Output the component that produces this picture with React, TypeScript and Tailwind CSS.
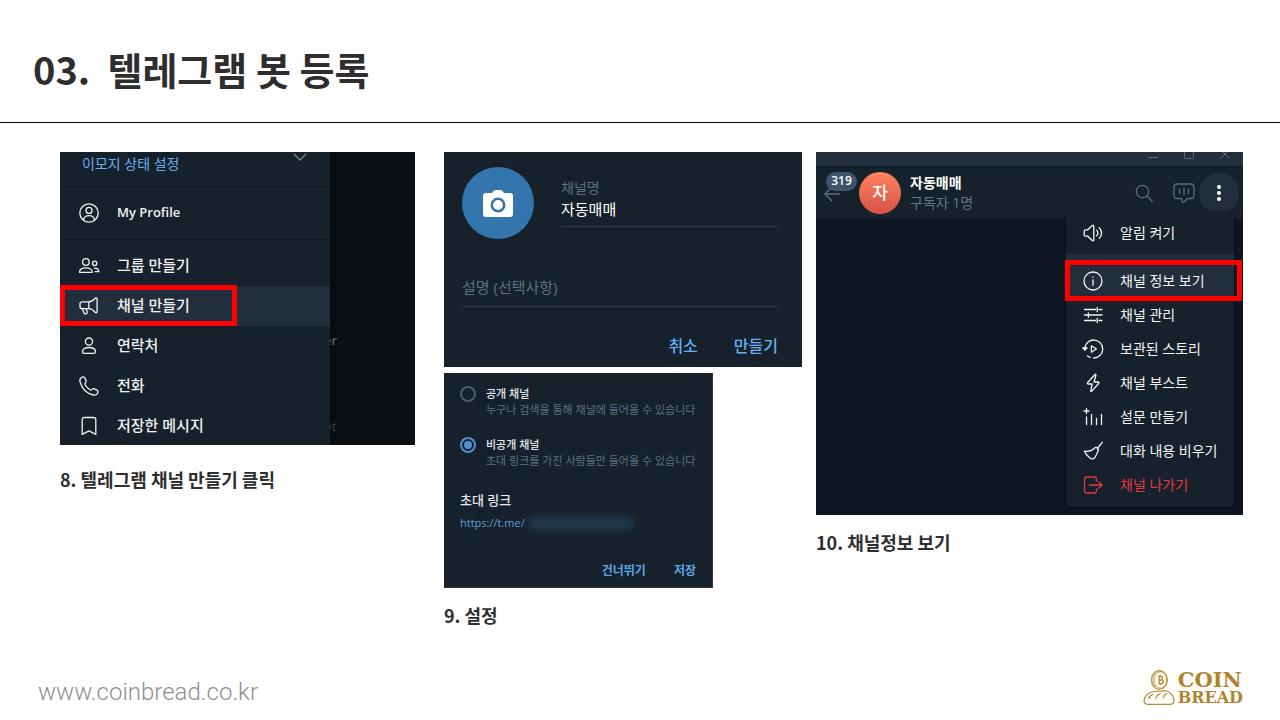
import type { ReactNode } from "react";

function Icon({ children, className = "size-6" }: { children: ReactNode; className?: string }) {
  return (
    <svg
      viewBox="0 0 24 24"
      fill="none"
      stroke="currentColor"
      strokeWidth="1.3"
      strokeLinecap="round"
      strokeLinejoin="round"
      className={`shrink-0 ${className}`}
      aria-hidden="true"
    >
      {children}
    </svg>
  );
}

const icons = {
  profile: (
    <>
      <circle cx="12" cy="12" r="9.2" />
      <circle cx="12" cy="9.4" r="3" />
      <path d="M6.600 18.600c.4-2.600 2.600-4 5.400-4s5 1.400 5.400 4" />
    </>
  ),
  group: (
    <>
      <circle cx="8.900" cy="8" r="3.300" />
      <path d="M2.500 18.300c0-2.900 2.600-4.400 6.400-4.400s6.400 1.500 6.400 4.400z" />
      <circle cx="17.700" cy="9.300" r="2.200" />
      <path d="M17.300 14.100c2.800 0 4.500 1.300 4.500 3.600h-3.600" />
    </>
  ),
  megaphone: (
    <>
      <path d="M11.800 7.800H5.200c-1.300 0-2.200.9-2.200 2.100v2.600c0 1.300.9 2.200 2.200 2.200h6.600zM11.800 7.800c2.500 0 4.700-1.600 6.300-3.500.7-.8 2-.4 2 .7v12.600c0 1.100-1.300 1.500-2 .7-1.600-1.900-3.800-3.600-6.300-3.600" />
      <path d="M5.300 14.800l1.600 4c.4 1 1.300 1.300 2.300.9 1-.4 1.300-1.300.9-2.200l-1-2.700" />
    </>
  ),
  contact: (
    <>
      <circle cx="12" cy="7.600" r="3.600" />
      <path d="M5.500 17.800c0-3 2.700-4.300 6.500-4.300s6.500 1.300 6.500 4.300c0 .9-.6 1.500-1.500 1.500H7c-.9 0-1.500-.6-1.500-1.500z" />
    </>
  ),
  phone: (
    <path d="M4.400 3.500c1.500-1 2.800-.7 3.500.6l1.200 2.500c.4.900.1 1.600-.5 2.200-.8.700-.9 1.300-.4 2.200 1.200 2 2.700 3.500 4.800 4.800.9.500 1.500.4 2.200-.4.600-.7 1.300-.9 2.200-.5l2.500 1.300c1.300.7 1.500 2 .5 3.400-.9 1.300-2.400 1.800-4.100 1.400C9.600 19.400 4.800 14.600 3 7.600c-.4-1.700.100-3.200 1.400-4.100z" />
  ),
  bookmark: (
    <path d="M5.200 5.600c0-1.300.8-2.100 2.100-2.100h9.400c1.300 0 2.100.8 2.100 2.100v14.800L12 16.900l-6.800 3.500z" />
  ),
  speaker: (
    <>
      <path d="M4.600 8.800h2.200l4.500-4.300c.6-.6 1.500-.2 1.500.6v13.800c0 .8-.9 1.200-1.500.6l-4.500-4.300H4.600c-.9 0-1.400-.5-1.400-1.400v-3.600c0-.9.5-1.400 1.400-1.400z" />
      <path d="M15.700 9.200c1.600 1.500 1.600 4.100 0 5.600M18.300 6.800c3 2.900 3 7.500 0 10.400" />
    </>
  ),
  info: (
    <>
      <circle cx="12" cy="12" r="9" />
      <path d="M12 11v5.200M12 8v.2" />
    </>
  ),
  sliders: (
    <path d="M3.500 6.500h11M18 6.500h3M16.200 4.500v4M8.500 12H21M3.500 12H7M7.400 9.800v4.400M3.500 17.500h11M18 17.500h3M16.200 15.500v4" />
  ),
  story: (
    <>
      <path d="M3.800 10.800A9 9 0 1 1 12.600 21M9.400 20.500a9 9 0 0 1-3-1.700" />
      <path d="M1.800 10.800l2 2.400 2.300-2.400z" fill="currentColor" />
      <path d="M10.400 8.800l5 3.200-5 3.200z" />
    </>
  ),
  bolt: (
    <path d="M14 3.500l-7.500 8.300c-.5.600-.3 1.200.5 1.200h4.200l-1.500 6.800c-.1.700.400 1.100.9.600l7.200-8.200c.5-.6.300-1.200-.5-1.200h-4.200l1.800-6.800c.2-.7-.4-1.200-.9-.7z" />
  ),
  poll: <path d="M5.500 3.500v5M3 6h5M5.500 12v7.500M10.500 9.500v10M15.500 13.500v6M20.500 9.500v10" />,
  broom: (
    <>
      <path d="M21.300 3.300l-5 6.200" />
      <path d="M3.500 12.200c4.300.6 7.300-.2 9.600-2.800.9-1 2.300-1.200 3.300-.4s1.200 2.200.5 3.300c-1.400 2.200-1.300 4.600-3.700 6.900-1.300 1.100-2.900.8-4.500-.4-2.300-1.600-4.200-3.800-5.200-6.600z" />
    </>
  ),
  leave: (
    <path d="M15.500 8.200V6.500c0-1.500-1-2.500-2.500-2.500H6C4.500 4 3.500 5 3.500 6.500v11C3.500 19 4.500 20 6 20h7c1.500 0 2.500-1 2.500-2.500v-1.700M8.500 12h12.300M17.600 8.600L21 12l-3.400 3.400" />
  ),
};

type IconName = keyof typeof icons;

function SideRow({ icon, label, active }: { icon: IconName; label: string; active?: boolean }) {
  return (
    <button
      type="button"
      className={`relative flex h-10 w-full shrink-0 items-center gap-[16px] pl-[17px] text-left text-[#f0f2f4] ${active ? "bg-[#232e3c]" : ""}`}
    >
      <Icon>{icons[icon]}</Icon>
      {icon === "profile" ? (
        <span className="text-[13px] font-semibold">{label}</span>
      ) : (
        <span className="pb-[2px] text-[15px] font-medium">{label}</span>
      )}
      {active && <span className="absolute -top-px left-0 h-[41px] w-[177px] border-5 border-[#ff0000]" />}
    </button>
  );
}

function SideMenuPanel() {
  return (
    <div className="flex h-[293px] overflow-hidden bg-[#0b1014]">
      <nav className="z-10 flex w-[270px] shrink-0 flex-col bg-[#17212b]">
        <div className="flex h-[35px] shrink-0 justify-between border-b border-[#101921] pr-[22px] pl-[22px] text-[#64b0f2]">
          <a href="#status" className="mt-[2px] text-[14px] leading-5">이모지 상태 설정</a>
          <svg viewBox="0 0 16 16" className="size-4 text-[#6d7f8f]" fill="none" stroke="currentColor" strokeWidth="1.5" aria-hidden="true">
            <path d="M2 2l6 6 6-6" />
          </svg>
        </div>
        <div className="shrink-0 border-b border-[#101921] py-[6px]">
          <SideRow icon="profile" label="My Profile" />
        </div>
        <div className="pt-[6px]">
          <SideRow icon="group" label="그룹 만들기" />
          <SideRow icon="megaphone" label="채널 만들기" active />
          <SideRow icon="contact" label="연락처" />
          <SideRow icon="phone" label="전화" />
          <SideRow icon="bookmark" label="저장한 메시지" />
        </div>
      </nav>
      <div className="w-[7px] shrink-0 bg-[#080c10]" />
      <div className="-ml-[7px] flex flex-col pt-[178px] text-[13px] leading-5">
        <span className="-ml-[6px] font-semibold text-[#5c6063]">er</span>
        <span className="mt-[66px] -ml-[6px] text-[#3a3f43]">ot</span>
      </div>
    </div>
  );
}

function NewChannelPanel() {
  return (
    <form className="flex h-[215px] flex-col bg-[#17212b] pt-[15px] pr-[24px] pl-[18px]">
      <div className="flex gap-[27px]">
        <button type="button" aria-label="사진" className="flex size-[72px] shrink-0 items-center justify-center rounded-full bg-[#3375ad]">
          <svg viewBox="0 0 30 27" className="h-[27px] w-[30px]" aria-hidden="true">
            <path fill="#fff" d="M3 3h6l1.500-2Q11.300 0 12.500 0h5q1.200 0 2 1L21 3h6q3 0 3 3v18q0 3-3 3H3q-3 0-3-3V6q0-3 3-3z" />
            <circle cx="15" cy="15" r="6.200" fill="none" stroke="#3375ad" strokeWidth="2.600" />
          </svg>
        </button>
        <div className="flex grow flex-col pt-[11px]">
          <label htmlFor="name" className="text-[14px] leading-5 text-[#5f7082]">채널명</label>
          <input
            id="name"
            defaultValue="자동매매"
            className="h-[29px] w-full border-b border-[#323d48] pb-[8px] text-[15px] text-white outline-none"
          />
        </div>
      </div>
      <input
        aria-label="설명 (선택사항)"
        placeholder="설명 (선택사항)"
        className="mt-[35px] h-[33px] w-full shrink-0 border-b border-[#323d48] pb-[6px] text-[15px] text-white outline-none placeholder:text-[#5f7082]"
      />
      <div className="mt-[29px] flex justify-end gap-[36px] text-[16px] leading-5 font-medium text-[#64b0f2]">
        <button type="button">취소</button>
        <button type="button">만들기</button>
      </div>
    </form>
  );
}

function ChannelType({ id, title, note, checked }: { id: string; title: string; note: string; checked?: boolean }) {
  return (
    <div className="flex h-[51px] gap-[10px]">
      <input
        id={id}
        type="radio"
        name="type"
        defaultChecked={checked}
        className="mt-px size-4 shrink-0 appearance-none rounded-full border-2 border-[#4d5d6d] p-[2px] checked:border-[#5290cf] checked:bg-[#5290cf] checked:bg-clip-content"
      />
      <label htmlFor={id} className="mt-px flex flex-col text-[11px] leading-4">
        <span className="font-medium text-[#e6eaee]">{title}</span>
        <span className="text-[#5f7082]">{note}</span>
      </label>
    </div>
  );
}

function ChannelTypePanel() {
  return (
    <form className="mt-[6px] flex h-[215px] w-[269px] flex-col border-r border-b border-[#2a3541] bg-[#17212b] pt-[12px] pr-[16px] pl-[16px]">
      <ChannelType id="public" title="공개 채널" note="누구나 검색을 통해 채널에 들어올 수 있습니다" />
      <ChannelType id="private" title="비공개 채널" note="초대 링크를 가진 사람들만 들어올 수 있습니다" checked />
      <h3 className="mt-[3px] text-[13px] leading-5 font-medium text-[#e6eaee]">초대 링크</h3>
      <div className="mt-[3px] flex items-center text-[11px] leading-5 text-[#5aa0dc]">
        <a href="https://t.me/">https://t.me/</a>
        <span className="ml-1 h-3 w-[104px] rounded bg-[#223c53] blur-[4px]" />
      </div>
      <div className="mt-[28px] flex justify-end gap-[28px] text-[12px] leading-5 font-semibold text-[#5aa5e6]">
        <button type="button">건너뛰기</button>
        <button type="button">저장</button>
      </div>
    </form>
  );
}

function MenuItem({ icon, label, danger }: { icon: IconName; label: string; danger?: boolean }) {
  return (
    <button
      type="button"
      className={`flex h-[34px] w-full items-center gap-[15px] pl-[15px] text-left text-[14px] ${danger ? "text-[#e53941]" : "text-[#f3f5f7]"}`}
    >
      <Icon>{icons[icon]}</Icon>
      <span className="pb-[2px]">{label}</span>
    </button>
  );
}

function ChannelPanel() {
  return (
    <div className="relative h-[363px] bg-[#0e1621] text-[#5e6d7a]">
      <div className="flex h-[14px] items-start justify-end gap-[24px] overflow-hidden bg-[#242f3d] pr-[12px]">
        <svg viewBox="0 0 12 8" className="h-2 w-3" stroke="currentColor" aria-hidden="true"><path d="M1 5.500h10" /></svg>
        <svg viewBox="0 0 12 8" className="h-2 w-3" fill="none" stroke="currentColor" aria-hidden="true"><path d="M1.500 0v5.500q0 1 1 1h7q1 0 1-1V0" /></svg>
        <svg viewBox="0 0 12 8" className="h-2 w-3" stroke="currentColor" aria-hidden="true"><path d="M1.500 6.500l8-8M10.500 6.500l-8-8" /></svg>
      </div>
      <header className="flex h-[54px] items-center border-b border-[#0c141d] bg-[#17212b] pr-[4px] pl-[7px]">
        <button type="button" aria-label="뒤로" className="relative h-[42px] w-[36px]">
          <svg viewBox="0 0 18 16" className="mt-[2px] h-4 w-[18px]" fill="none" stroke="currentColor" strokeWidth="1.500" aria-hidden="true">
            <path d="M17 8H2M9 1L2 8l7 7" />
          </svg>
          <span className="absolute top-0 left-[3px] flex h-[19px] w-[31px] items-center justify-center rounded-full bg-[#3e546a] text-[12px] font-semibold text-white">
            319
          </span>
        </button>
        <span className="flex size-[42px] items-center justify-center rounded-full bg-linear-to-b from-[#ff845e] to-[#d45246] text-[17px] font-medium text-white">자</span>
        <div className="ml-[9px] grow text-[14px] leading-5">
          <div className="font-bold text-white">자동매매</div>
          <div className="text-[#647687]">구독자 1명</div>
        </div>
        <div className="flex items-center gap-[16px]">
          <button type="button" aria-label="검색"><Icon><circle cx="10.500" cy="10.500" r="6.200" /><path d="M15.200 15.200l5 5" /></Icon></button>
          <button type="button" aria-label="음성 채팅"><Icon><path d="M5 3h14q3 0 3 3v8.500q0 3-3 3h-3.500L12 21q-1.700 1.200-2-.8l-.5-2.700H5q-3 0-3-3V6q0-3 3-3zM7.500 8v4.500M12 7v6.500M16.500 8v4.500" /></Icon></button>
        </div>
        <button type="button" aria-label="메뉴" className="ml-[3px] flex size-10 items-center justify-center rounded-full bg-[#232e3c] text-white">
          <svg viewBox="0 0 4 16" className="h-4 w-1" fill="currentColor" aria-hidden="true">
            <circle cx="2" cy="2" r="2" /><circle cx="2" cy="8" r="2" /><circle cx="2" cy="14" r="2" />
          </svg>
        </button>
      </header>
      <div className="absolute top-[59px] right-[9px] w-[168px] rounded-[4px] bg-[#17212b] pt-[5px] pb-[5px] shadow-[0_1px_3px_#060b10]">
        <MenuItem icon="speaker" label="알림 켜기" />
        <div className="relative mt-[4px] bg-[#232e3c] pt-[10px]">
          <MenuItem icon="info" label="채널 정보 보기" />
          <span className="absolute top-[6px] -right-[8px] -left-px h-[41px] border-5 border-[#ff0000]" />
        </div>
        <MenuItem icon="sliders" label="채널 관리" />
        <MenuItem icon="story" label="보관된 스토리" />
        <MenuItem icon="bolt" label="채널 부스트" />
        <MenuItem icon="poll" label="설문 만들기" />
        <MenuItem icon="broom" label="대화 내용 비우기" />
        <MenuItem icon="leave" label="채널 나가기" danger />
      </div>
    </div>
  );
}

function Logo() {
  return (
    <div className="flex items-center gap-[3px]">
      <svg viewBox="0 0 32 36" className="h-9 w-8" fill="none" stroke="#b98a35" strokeWidth="1.200" strokeLinecap="round" aria-hidden="true">
        <ellipse cx="16.300" cy="10" rx="7.800" ry="9.300" fill="#fffaf0" />
        <ellipse cx="17.600" cy="10" rx="6.800" ry="8.300" strokeWidth=".8" />
        <path d="M9 7l1.500.3M8.800 10h1.500M9 13l1.500-.3M10.500 4l1.200.6M10.500 16l1.200-.6" strokeWidth=".8" />
        <path d="M15.800 6.500h2q1.900 0 1.900 1.700T17.800 10h-1.500M16.300 10h2q2 0 2 1.800t-2 1.800h-2.500M16.300 6.500v7M17.300 5.300v1.200M17.300 13.600v1.200" strokeWidth="1.300" />
        <path d="M4.500 34.300C1.500 34.300.8 32 1.200 29.800c.7-4 4.500-7.300 9.800-8.300 3-.5 5.200-.2 6.700-.2 3.500-1.200 7-.6 9.700 1.800 2.700 2.400 3.800 5.600 3.500 8.200-.2 2-1.200 3-3.200 3z" fill="#fffdf8" />
        <path d="M5.800 28.500c.5-2 2-3.500 4.200-4M12.800 28.500c.4-2.300 2-4 4.400-4.700M20.300 28c.2-2 1.400-3.600 3.500-4.300" />
      </svg>
      <div className="flex flex-col font-['DejaVu_Serif',serif] font-bold text-[#b0842c]">
        <span className="text-[21px] leading-5">COIN</span>
        <span className="text-[16px] leading-4">BREAD</span>
      </div>
    </div>
  );
}

export default function App() {
  return (
    <div className="flex min-h-screen flex-col bg-white font-['Open_Sans','Noto_Sans_CJK_KR',sans-serif] text-[#2e2e2e]">
      <header className="flex h-[123px] items-center border-b border-black px-[33px]">
        <h1 className="mt-4 font-['Noto_Sans_CJK_KR',sans-serif] text-[38px] leading-[56px] font-bold whitespace-pre">03.  텔레그램 봇 등록</h1>
      </header>
      <main className="grid grow grid-cols-[384fr_372fr_427fr] items-start pt-[29px] pr-[37px] pl-[60px] font-normal">
        <section className="pr-[29px]">
          <SideMenuPanel />
          <h2 className="mt-[20px] font-['Noto_Sans_CJK_KR',sans-serif] text-[18px] leading-7 font-bold">8. 텔레그램 채널 만들기 클릭</h2>
        </section>
        <section className="pr-[14px]">
          <NewChannelPanel />
          <ChannelTypePanel />
          <h2 className="mt-[13px] font-['Noto_Sans_CJK_KR',sans-serif] text-[18px] leading-7 font-bold">9. 설정</h2>
        </section>
        <section>
          <ChannelPanel />
          <h2 className="mt-[13px] font-['Noto_Sans_CJK_KR',sans-serif] text-[18px] leading-7 font-bold">10. 채널정보 보기</h2>
        </section>
      </main>
      <footer className="flex items-center justify-between pr-[37px] pb-[12px] pl-[38px]">
        <a href="https://www.coinbread.co.kr" className="mt-2 font-['Roboto',sans-serif] text-[24px] leading-8 font-light text-[#8f8f8f]">www.coinbread.co.kr</a>
        <Logo />
      </footer>
    </div>
  );
}
